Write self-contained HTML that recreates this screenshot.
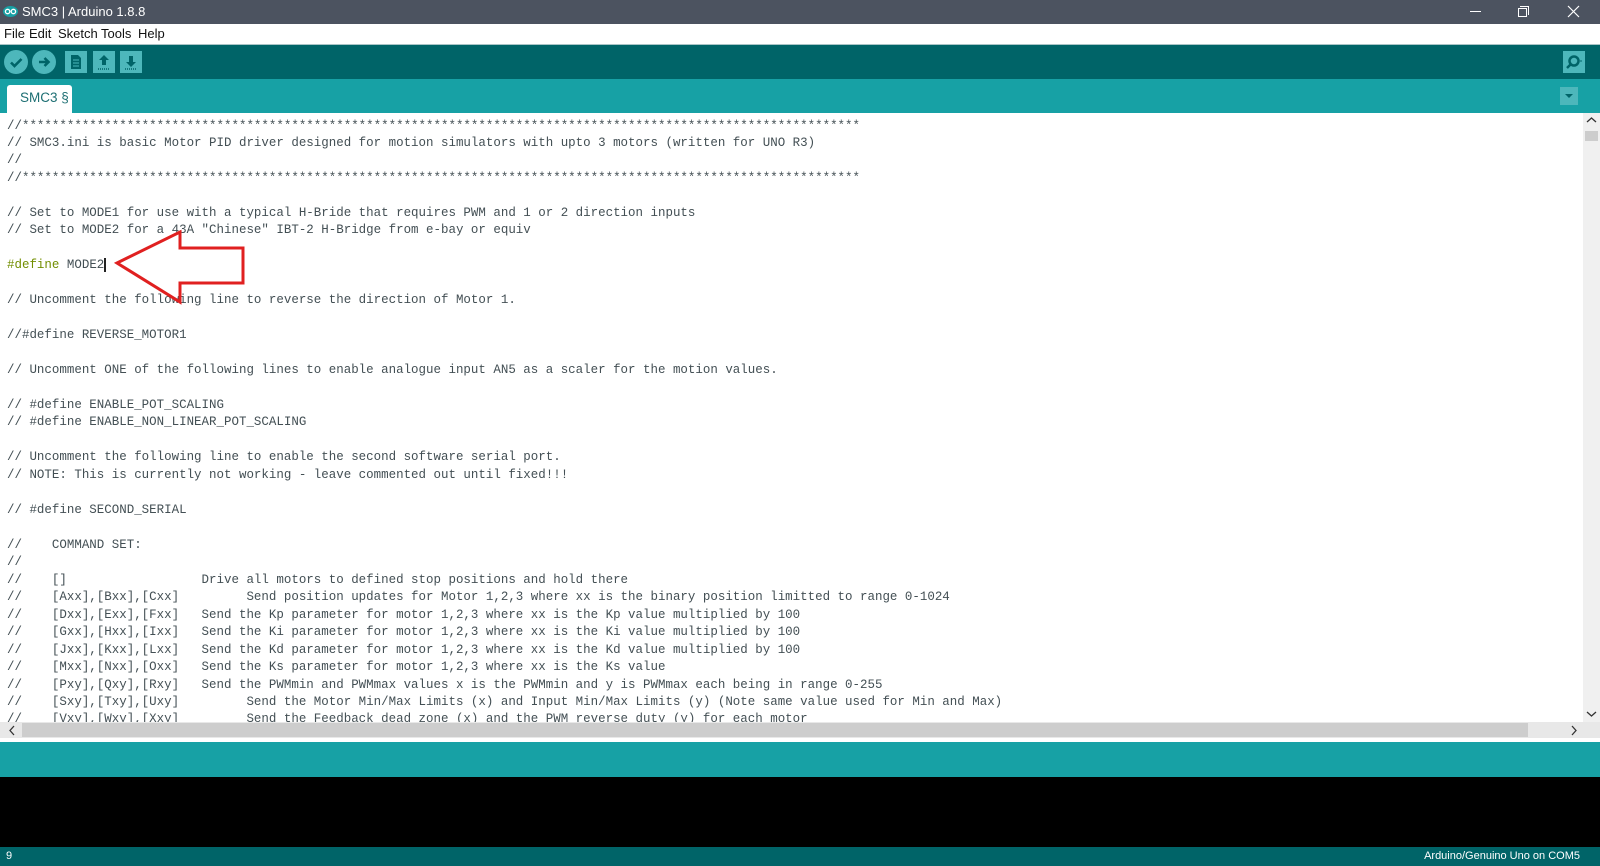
<!DOCTYPE html>
<html><head><meta charset="utf-8"><style>
*{margin:0;padding:0;box-sizing:border-box}
body{width:1600px;height:866px;overflow:hidden;background:#fff;font-family:"Liberation Sans",sans-serif;position:relative}
.abs{position:absolute}
#title{left:0;top:0;width:1600px;height:24px;background:#4c5360;color:#fff;font-size:13px}
#menu{left:0;top:24px;width:1600px;height:21px;background:#fff;font-size:13px;color:#111;border-bottom:1px solid #a9c4c6}
#tool{left:0;top:45px;width:1600px;height:34px;background:#006468}
#tabs{left:0;top:79px;width:1600px;height:34px;background:#17a1a5}
.btnc{position:absolute;width:24px;height:24px;border-radius:50%;background:#4db7bb;top:50px}
.btns{position:absolute;width:22px;height:22px;background:#4db7bb;top:51px}
#code{left:7px;top:117.5px;font-family:"Liberation Mono",monospace;font-size:12.47px;line-height:17.47px;color:#434f54;white-space:pre;height:604px;overflow:hidden;width:1570px}
.kw{color:#728e00}
#hs{left:0;top:722px;width:1600px;height:16px;background:#e8e8e8}
#vs{left:1583px;top:113px;width:17px;height:609px;background:#f0f0f0}
#msg{left:0;top:742px;width:1600px;height:35px;background:#17a1a5}
#con{left:0;top:777px;width:1600px;height:70px;background:#000}
#status{left:0;top:847px;width:1600px;height:19px;background:#006468;color:#fff;font-size:11px}
</style></head><body>
<div id="title" class="abs">
<svg class="abs" style="left:3px;top:6px" width="15" height="11" viewBox="0 0 15 11"><ellipse cx="7.5" cy="5.5" rx="7.5" ry="5.5" fill="#17a1a5"/><circle cx="4.6" cy="5.5" r="2.2" fill="none" stroke="#fff" stroke-width="1.3"/><circle cx="10.4" cy="5.5" r="2.2" fill="none" stroke="#fff" stroke-width="1.3"/></svg>
<span class="abs" style="left:22px;top:4px">SMC3 | Arduino 1.8.8</span>
<div class="abs" style="left:1470px;top:11px;width:11px;height:1px;background:#fff"></div>
<div class="abs" style="left:1518px;top:8px;width:9px;height:9px;border:1px solid #fff"></div>
<div class="abs" style="left:1520px;top:6px;width:9px;height:9px;border-top:1px solid #fff;border-right:1px solid #fff"></div>
<svg class="abs" style="left:1567px;top:5px" width="13" height="13"><path d="M1 1L12 12M12 1L1 12" stroke="#fff" stroke-width="1.2"/></svg>
</div>
<div id="menu" class="abs"><span class="abs" style="left:4px;top:2px">File</span><span class="abs" style="left:29px;top:2px">Edit</span><span class="abs" style="left:58px;top:2px">Sketch</span><span class="abs" style="left:101px;top:2px">Tools</span><span class="abs" style="left:138px;top:2px">Help</span></div>
<div id="tool" class="abs"></div>
<div class="btnc" style="left:4px"><svg width="24" height="24"><path d="M7 12.5l3.5 3.5 7-7" stroke="#006468" stroke-width="2.6" fill="none"/></svg></div>
<div class="btnc" style="left:32px"><svg width="24" height="24"><path d="M7 12h9M12.5 8l4 4-4 4" stroke="#006468" stroke-width="2.6" fill="none"/></svg></div>
<div class="btns" style="left:65px"><svg width="22" height="22"><path d="M6 4h7l3 3v11H6z" fill="#006468"/><path d="M8 9h6M8 12h6M8 15h6" stroke="#4db7bb" stroke-width="1"/></svg></div>
<div class="btns" style="left:93px"><svg width="22" height="22"><path d="M11 4l-5 5h3v5h4V9h3z" fill="#006468"/><path d="M5 18h12" stroke="#006468" stroke-width="1.5" stroke-dasharray="1 1"/></svg></div>
<div class="btns" style="left:120px"><svg width="22" height="22"><path d="M11 16l-5-5h3V5h4v6h3z" fill="#006468"/><path d="M5 18h12" stroke="#006468" stroke-width="1.5" stroke-dasharray="1 1"/></svg></div>
<div class="btns" style="left:1563px;width:22px"><svg width="22" height="22"><circle cx="11" cy="10" r="4.5" stroke="#006468" stroke-width="2.5" fill="none"/><path d="M8 13l-4 4" stroke="#006468" stroke-width="2.5"/><path d="M17 10h2" stroke="#006468" stroke-width="1"/></svg></div>
<div id="tabs" class="abs"></div>
<div class="abs" style="left:7px;top:85px;width:65px;height:28px;background:#fff;border-radius:3px 3px 0 0;color:#1d6f73;font-size:13.5px;line-height:26px;padding-left:13px">SMC3 §</div>
<div class="abs" style="left:1560px;top:87px;width:18px;height:18px;background:#4db7bb"><svg width="18" height="18"><path d="M5 7h8l-4 4z" fill="#006468"/></svg></div>
<div id="code" class="abs">//****************************************************************************************************************
// SMC3.ini is basic Motor PID driver designed for motion simulators with upto 3 motors (written for UNO R3)
//
//****************************************************************************************************************

// Set to MODE1 for use with a typical H-Bride that requires PWM and 1 or 2 direction inputs
// Set to MODE2 for a 43A "Chinese" IBT-2 H-Bridge from e-bay or equiv

<span class="kw">#define</span> MODE2<span style="border-left:2px solid #222"></span>

// Uncomment the following line to reverse the direction of Motor 1.

//#define REVERSE_MOTOR1

// Uncomment ONE of the following lines to enable analogue input AN5 as a scaler for the motion values.

// #define ENABLE_POT_SCALING
// #define ENABLE_NON_LINEAR_POT_SCALING

// Uncomment the following line to enable the second software serial port.
// NOTE: This is currently not working - leave commented out until fixed!!!

// #define SECOND_SERIAL

//    COMMAND SET:
//
//    []                  Drive all motors to defined stop positions and hold there
//    [Axx],[Bxx],[Cxx]         Send position updates for Motor 1,2,3 where xx is the binary position limitted to range 0-1024
//    [Dxx],[Exx],[Fxx]   Send the Kp parameter for motor 1,2,3 where xx is the Kp value multiplied by 100
//    [Gxx],[Hxx],[Ixx]   Send the Ki parameter for motor 1,2,3 where xx is the Ki value multiplied by 100
//    [Jxx],[Kxx],[Lxx]   Send the Kd parameter for motor 1,2,3 where xx is the Kd value multiplied by 100
//    [Mxx],[Nxx],[Oxx]   Send the Ks parameter for motor 1,2,3 where xx is the Ks value
//    [Pxy],[Qxy],[Rxy]   Send the PWMmin and PWMmax values x is the PWMmin and y is PWMmax each being in range 0-255
//    [Sxy],[Txy],[Uxy]         Send the Motor Min/Max Limits (x) and Input Min/Max Limits (y) (Note same value used for Min and Max)
//    [Vxy],[Wxy],[Xxy]         Send the Feedback dead zone (x) and the PWM reverse duty (y) for each motor</div>
<svg class="abs" style="left:0;top:0" width="300" height="320"><path d="M117 263L180 232V248H243V283H180V302Z" fill="none" stroke="#e02020" stroke-width="3" stroke-linejoin="miter"/></svg>
<div id="vs" class="abs"><svg class="abs" style="left:3px;top:3px" width="11" height="8"><path d="M1 6l4.5-4 4.5 4" stroke="#333" stroke-width="1.3" fill="none"/></svg><div class="abs" style="left:2px;top:18px;width:13px;height:10px;background:#cdcdcd"></div><svg class="abs" style="left:3px;top:597px" width="11" height="8"><path d="M1 2l4.5 4 4.5-4" stroke="#333" stroke-width="1.3" fill="none"/></svg></div>
<div id="hs" class="abs"><div class="abs" style="left:22px;top:1px;width:1506px;height:14px;background:#cdcdcd"></div><svg class="abs" style="left:8px;top:3px" width="8" height="11"><path d="M6 1L2 5.5 6 10" stroke="#333" stroke-width="1.3" fill="none"/></svg><svg class="abs" style="left:1570px;top:3px" width="8" height="11"><path d="M2 1l4 4.5L2 10" stroke="#333" stroke-width="1.3" fill="none"/></svg></div>
<div id="msg" class="abs"></div>
<div id="con" class="abs"></div>
<div id="status" class="abs"><span class="abs" style="left:6px;top:3px">9</span><span class="abs" style="right:20px;top:3px">Arduino/Genuino Uno on COM5</span></div>
</body></html>
